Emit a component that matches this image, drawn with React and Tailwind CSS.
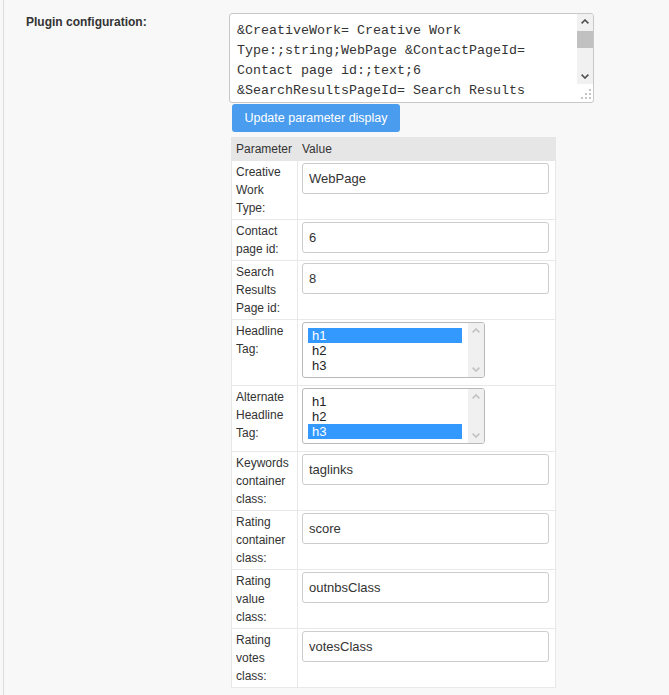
import React from "react";

const Chevron = ({ dir, color }) => (
  <svg width="8" height="5" viewBox="0 0 8 5">
    <path
      d={dir === "up" ? "M0.6 4.4 L4 1 L7.4 4.4" : "M0.6 0.6 L4 4 L7.4 0.6"}
      fill="none"
      stroke={color}
      strokeWidth="1.6"
    />
  </svg>
);

const Grip = () => (
  <svg width="11" height="11" viewBox="0 0 11 11">
    {[
      [8, 0],
      [4, 4],
      [8, 4],
      [0, 8],
      [4, 8],
      [8, 8],
    ].map(([x, y], i) => (
      <rect key={i} x={x} y={y} width="2" height="2" fill="#c4c4c4" />
    ))}
  </svg>
);

const TextInput = ({ value }) => (
  <input
    readOnly
    value={value}
    className="block w-[247px] h-[31px] mb-[5px] border border-[#cccccc] rounded-[3px] bg-white px-[6px] text-[13px] text-[#333] font-['Liberation_Sans',Arial,sans-serif] outline-none"
  />
);

const ListBox = ({ selected }) => (
  <div className="flex w-[183px] h-[56px] mb-[5px] border border-[#b9b9b9] rounded-[3px] bg-white overflow-hidden">
    <div className="flex-1 pl-[5px] pr-[6px] pt-[5px]">
      {["h1", "h2", "h3"].map((o) => (
        <div
          key={o}
          className={
            "h-[15px] leading-[15px] pl-[4px] text-[13px] " +
            (o === selected ? "bg-[#3399ff] text-white" : "text-[#222]")
          }
        >
          {o}
        </div>
      ))}
    </div>
    <div className="w-[16px] bg-[#f0f0f0] flex flex-col items-center justify-between pt-[5px] pb-[5px]">
      <Chevron dir="up" color="#c2c2c2" />
      <Chevron dir="down" color="#c2c2c2" />
    </div>
  </div>
);

const rows = [
  { label: ["Creative", "Work", "Type:"], input: "WebPage" },
  { label: ["Contact", "page id:"], input: "6" },
  { label: ["Search", "Results", "Page id:"], input: "8" },
  { label: ["Headline", "Tag:"], select: "h1" },
  { label: ["Alternate", "Headline", "Tag:"], select: "h3" },
  { label: ["Keywords", "container", "class:"], input: "taglinks" },
  { label: ["Rating", "container", "class:"], input: "score" },
  { label: ["Rating", "value", "class:"], input: "outnbsClass" },
  { label: ["Rating", "votes", "class:"], input: "votesClass" },
];

export default function App() {
  return (
    <div className="min-h-[695px] bg-[#f8f8f8] pl-[3px] font-['Liberation_Sans',Arial,sans-serif] text-[#333]">
      <div className="min-h-[695px] border-l border-[#dddddd] pl-[22px] pt-[13px] flex items-start">
        <div className="w-[203px] text-[12px] leading-[18px] font-bold text-[#333]">
          Plugin configuration:
        </div>
        <div className="flex flex-col items-start">
          {/* textarea */}
          <div className="flex w-[365px] h-[90px] border border-[#c8c8c8] rounded-[3px] bg-white overflow-hidden">
            <div className="flex-1 pl-[7px] pt-[7px] overflow-hidden whitespace-pre font-['Liberation_Mono','Courier_New',monospace] text-[13.33px] leading-[20px] text-[#333]">
              <div>&amp;CreativeWork= Creative Work</div>
              <div>Type:;string;WebPage &amp;ContactPageId=</div>
              <div>Contact page id:;text;6</div>
              <div>&amp;SearchResultsPageId= Search Results</div>
            </div>
            <div className="w-[16px] flex flex-col">
              <div className="h-[70px] bg-[#f1f1f1] flex flex-col">
                <div className="h-[15px] flex items-center justify-center">
                  <Chevron dir="up" color="#505050" />
                </div>
                <div className="h-[17px] mt-[2px] bg-[#c1c1c1]" />
                <div className="flex-1" />
                <div className="h-[15px] flex items-center justify-center">
                  <Chevron dir="down" color="#505050" />
                </div>
              </div>
              <div className="flex-1 flex items-end justify-end pr-[1px] pb-[2px]">
                <Grip />
              </div>
            </div>
          </div>

          {/* button */}
          <button className="mt-[1px] ml-[3px] h-[28px] w-[168px] bg-[#4a9cee] rounded-[3px] text-white text-[12.5px] flex items-center justify-center font-['Liberation_Sans',Arial,sans-serif]">
            Update parameter display
          </button>

          {/* table */}
          <table className="mt-[5px] ml-[2px] w-[325px] table-fixed border-collapse text-[12px] leading-[18px] text-[#333]">
            <colgroup>
              <col className="w-[66px]" />
              <col />
            </colgroup>
            <thead>
              <tr className="bg-[#e6e6e6]">
                <th className="border border-[#e6e6e6] px-[4px] py-[2px] text-left font-normal">
                  Parameter
                </th>
                <th className="border border-[#e6e6e6] px-[4px] py-[2px] text-left font-normal">
                  Value
                </th>
              </tr>
            </thead>
            <tbody>
              {rows.map((r, i) => (
                <tr key={i} className="bg-white">
                  <td className="border border-[#e8e8e8] px-[4px] py-[2px] align-top">
                    {r.label.map((l, j) => (
                      <div key={j}>{l}</div>
                    ))}
                  </td>
                  <td className="border border-[#e8e8e8] px-[4px] py-[2px] align-top">
                    {r.input !== undefined ? (
                      <TextInput value={r.input} />
                    ) : (
                      <ListBox selected={r.select} />
                    )}
                  </td>
                </tr>
              ))}
            </tbody>
          </table>
        </div>
      </div>
    </div>
  );
}
